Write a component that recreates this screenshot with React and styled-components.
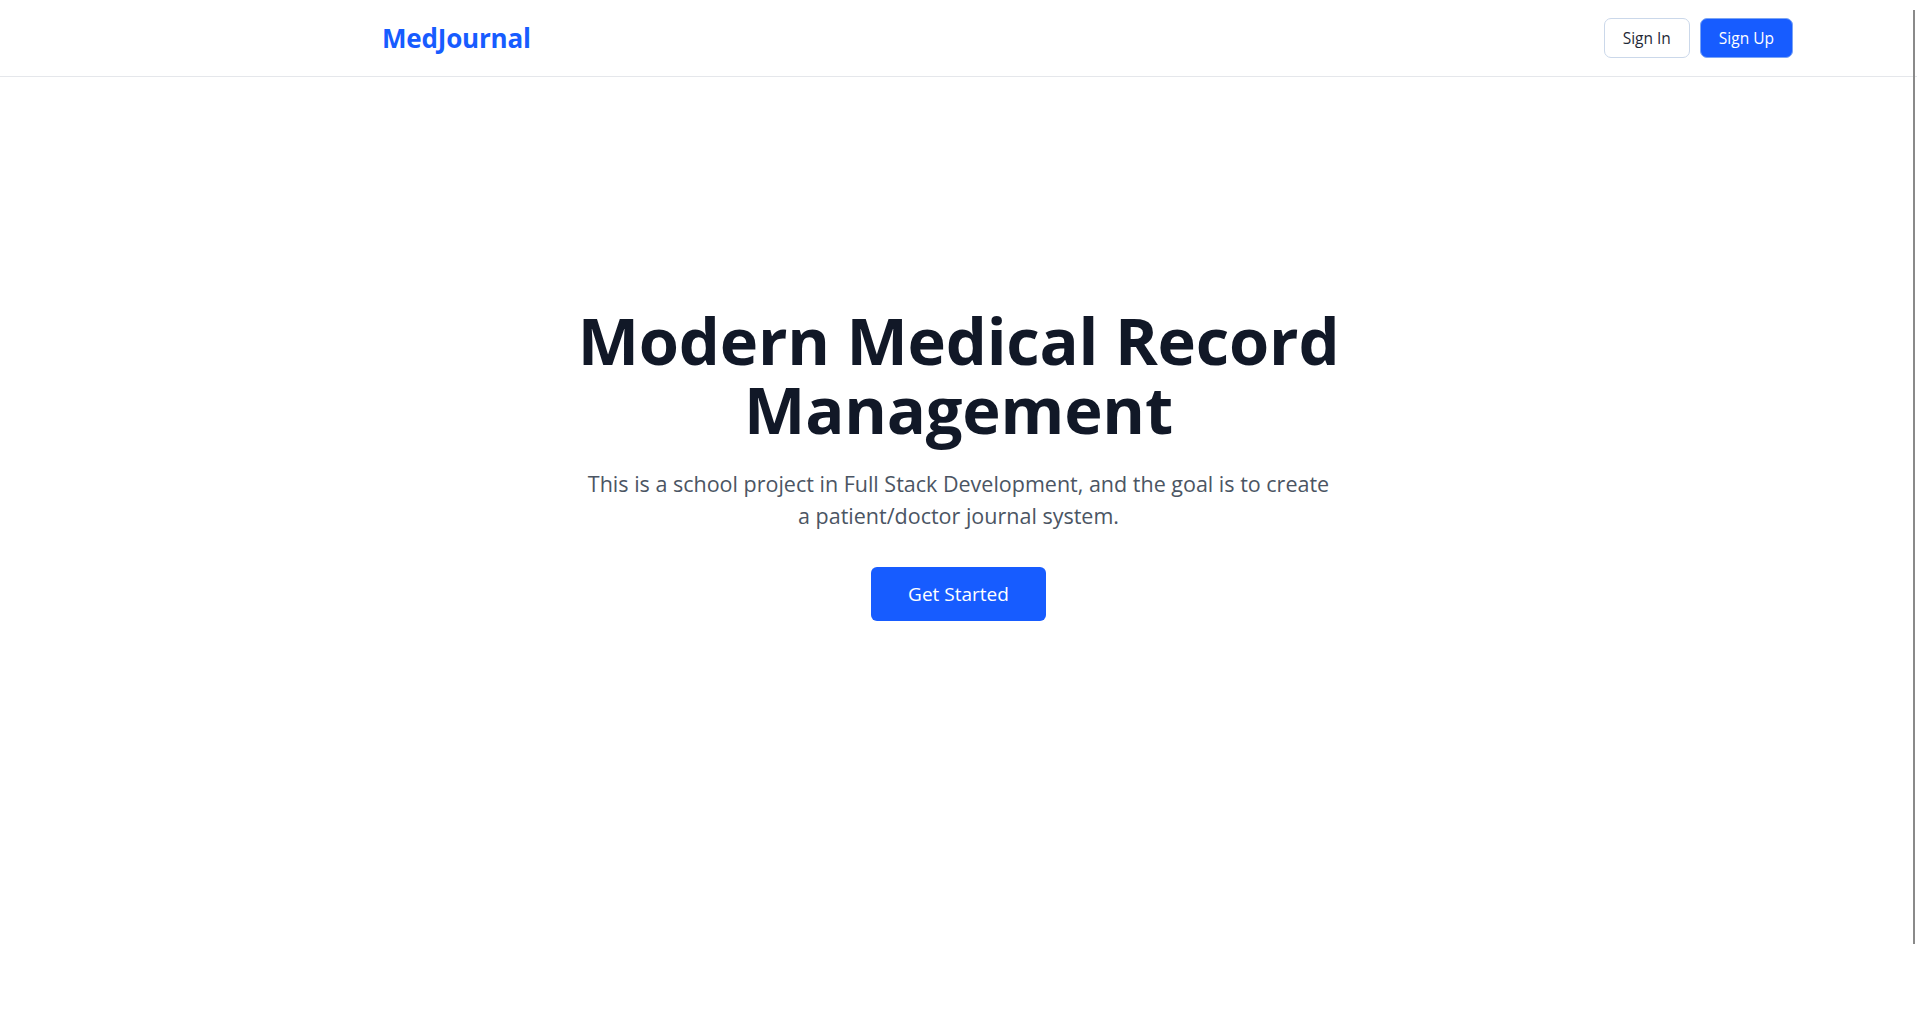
import React from 'react';
import styled, { createGlobalStyle } from 'styled-components';

const GlobalStyle = createGlobalStyle`
  * {
    box-sizing: border-box;
  }
  html, body {
    margin: 0;
    padding: 0;
    background: #ffffff;
    font-family: "Open Sans", "Noto Sans", Arial, sans-serif;
    color: #111827;
  }
`;

const Page = styled.div`
  min-height: 100vh;
  display: flex;
  flex-direction: column;
  background: #ffffff;
`;

// Top navigation bar
const NavBar = styled.header`
  height: 77px;
  display: flex;
  align-items: center;
  justify-content: space-between;
  padding: 0 124px 0 382px;
  border-bottom: 1px solid #e5e7eb;
`;

const Logo = styled.a`
  font-size: 26px;
  font-weight: 700;
  color: #175cff;
  text-decoration: none;
  letter-spacing: -0.2px;
`;

const NavActions = styled.div`
  display: flex;
  align-items: center;
  gap: 10px;
`;

const NavButton = styled.button`
  height: 40px;
  padding: 0 18px;
  border-radius: 7px;
  font-family: inherit;
  font-size: 15.5px;
  cursor: pointer;
  border: 1px solid ${(p) => (p.$primary ? '#7aa4f5' : '#cbd8ea')};
  background: ${(p) => (p.$primary ? '#175cff' : '#ffffff')};
  color: ${(p) => (p.$primary ? '#ffffff' : '#1f2937')};
`;

// Hero section
const Hero = styled.main`
  display: flex;
  flex-direction: column;
  align-items: center;
  text-align: center;
  padding-top: 229px;
`;

const Title = styled.h1`
  margin: 0;
  font-size: 65px;
  line-height: 69px;
  font-weight: 700;
  color: #111827;
  letter-spacing: -0.2px;
`;

const Lead = styled.p`
  margin: 24px 0 0;
  max-width: 750px;
  font-size: 21.5px;
  line-height: 32px;
  color: #4b5563;
`;

const CtaButton = styled.button`
  margin-top: 35px;
  height: 54px;
  padding: 0 37px;
  border: none;
  border-radius: 6px;
  background: #175cff;
  color: #ffffff;
  font-family: inherit;
  font-size: 19px;
  cursor: pointer;
`;

// Thin overlay scrollbar thumb on the right edge
const ScrollThumb = styled.div`
  position: fixed;
  top: 10px;
  right: 2px;
  width: 2px;
  height: 934px;
  background: #8a8a8a;
`;

export default function App() {
  return (
    <Page>
      <GlobalStyle />
      <NavBar>
        <Logo href="#">MedJournal</Logo>
        <NavActions>
          <NavButton>Sign In</NavButton>
          <NavButton $primary>Sign Up</NavButton>
        </NavActions>
      </NavBar>
      <Hero>
        <Title>
          Modern Medical Record
          <br />
          Management
        </Title>
        <Lead>
          This is a school project in Full Stack Development, and the goal is to create a
          patient/doctor journal system.
        </Lead>
        <CtaButton>Get Started</CtaButton>
      </Hero>
      <ScrollThumb />
    </Page>
  );
}
